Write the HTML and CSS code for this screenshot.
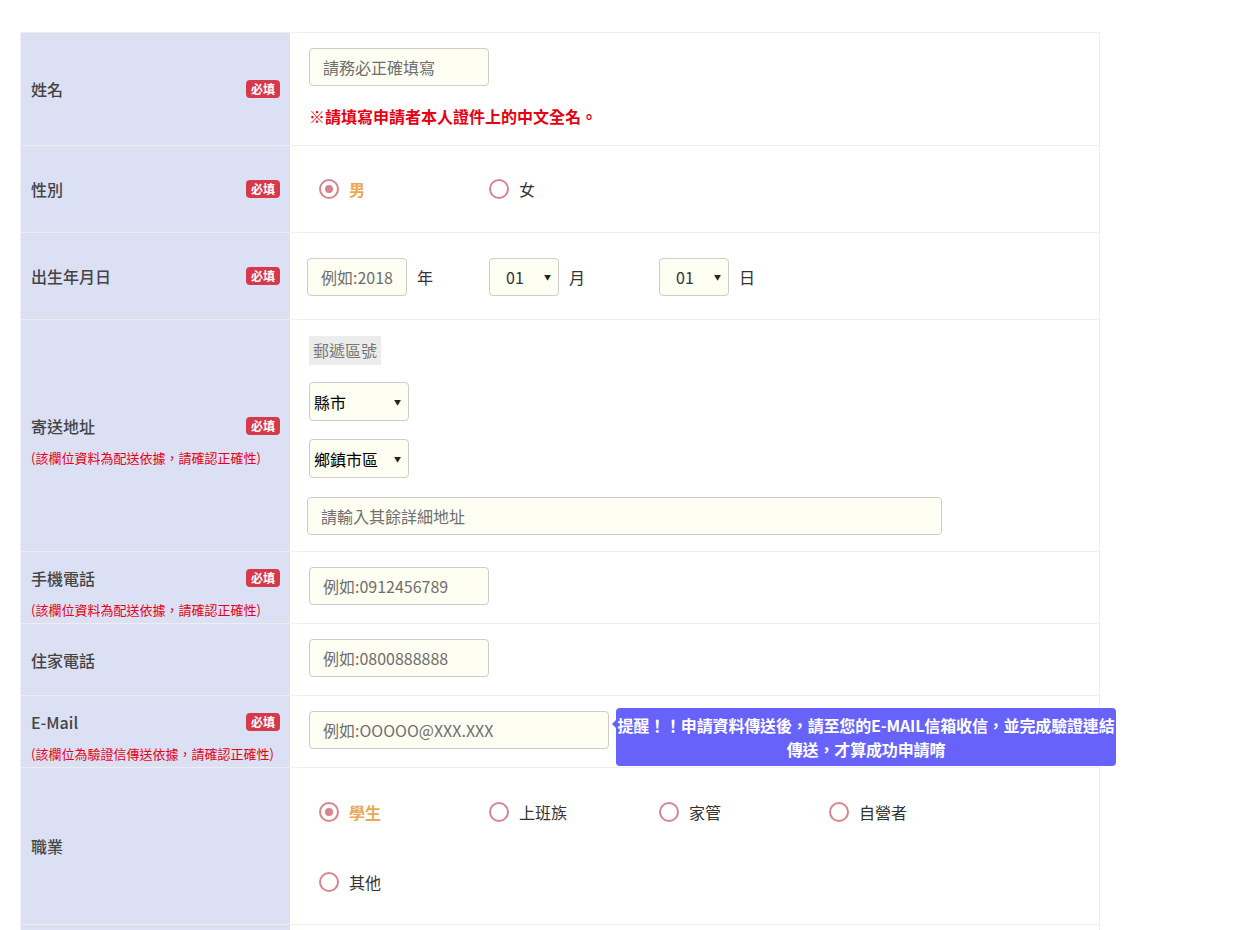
FILE: index.html
```html
<!DOCTYPE html>
<html lang="zh-Hant">
<head>
  <meta charset="UTF-8">
  <meta name="viewport" content="width=device-width, initial-scale=1.0">
  <title>申請表單</title>
  <link rel="stylesheet" href="styles.css">
</head>
<body>
  <div class="form">
    <!-- 姓名 -->
    <div class="row">
      <div class="label">
        <div class="label-head"><span>姓名</span><span class="badge">必填</span></div>
      </div>
      <div class="field name-field">
        <input class="text-input" type="text" placeholder="請務必正確填寫">
        <div class="warn">※請填寫申請者本人證件上的中文全名。</div>
      </div>
    </div>

    <!-- 性別 -->
    <div class="row">
      <div class="label">
        <div class="label-head"><span>性別</span><span class="badge">必填</span></div>
      </div>
      <div class="field radio-field gender-field">
        <label class="option checked"><span class="radio"></span>男</label>
        <label class="option"><span class="radio"></span>女</label>
      </div>
    </div>

    <!-- 出生年月日 -->
    <div class="row">
      <div class="label">
        <div class="label-head"><span>出生年月日</span><span class="badge">必填</span></div>
      </div>
      <div class="field date-field">
        <div class="date-group first">
          <input class="text-input year-input" type="text" placeholder="例如:2018">
          <span class="unit">年</span>
        </div>
        <div class="date-group">
          <span class="select-wrap date-select"><select><option>01</option></select></span>
          <span class="unit">月</span>
        </div>
        <div class="date-group">
          <span class="select-wrap date-select"><select><option>01</option></select></span>
          <span class="unit">日</span>
        </div>
      </div>
    </div>

    <!-- 寄送地址 -->
    <div class="row">
      <div class="label has-note">
        <div class="label-head"><span>寄送地址</span><span class="badge">必填</span></div>
        <div class="note">(該欄位資料為配送依據，請確認正確性)</div>
      </div>
      <div class="field address-field">
        <span class="zip">郵遞區號</span>
        <span class="select-wrap addr-select"><select><option>縣市</option></select></span>
        <span class="select-wrap addr-select"><select><option>鄉鎮市區</option></select></span>
        <input class="text-input addr-input" type="text" placeholder="請輸入其餘詳細地址">
      </div>
    </div>

    <!-- 手機電話 -->
    <div class="row">
      <div class="label has-note">
        <div class="label-head"><span>手機電話</span><span class="badge">必填</span></div>
        <div class="note">(該欄位資料為配送依據，請確認正確性)</div>
      </div>
      <div class="field">
        <input class="text-input" type="text" placeholder="例如:0912456789">
      </div>
    </div>

    <!-- 住家電話 -->
    <div class="row">
      <div class="label">
        <div class="label-head"><span>住家電話</span></div>
      </div>
      <div class="field">
        <input class="text-input" type="text" placeholder="例如:0800888888">
      </div>
    </div>

    <!-- E-Mail -->
    <div class="row">
      <div class="label has-note">
        <div class="label-head"><span>E-Mail</span><span class="badge">必填</span></div>
        <div class="note">(該欄位為驗證信傳送依據，請確認正確性)</div>
      </div>
      <div class="field">
        <div class="email-wrap">
          <input class="text-input email-input" type="text" placeholder="例如:OOOOO@XXX.XXX">
          <div class="tip">提醒！！申請資料傳送後，請至您的E-MAIL信箱收信，並完成驗證連結<br>傳送，才算成功申請唷</div>
        </div>
      </div>
    </div>

    <!-- 職業 -->
    <div class="row">
      <div class="label">
        <div class="label-head"><span>職業</span></div>
      </div>
      <div class="field radio-field job-field">
        <label class="option checked"><span class="radio"></span>學生</label>
        <label class="option"><span class="radio"></span>上班族</label>
        <label class="option"><span class="radio"></span>家管</label>
        <label class="option"><span class="radio"></span>自營者</label>
        <label class="option"><span class="radio"></span>其他</label>
      </div>
    </div>

    <div class="row">
      <div class="label"></div>
      <div class="field empty-field"></div>
    </div>
  </div>
</body>
</html>
```

FILE: styles.css
```css
body {
  margin: 0;
  padding: 32px 0 0 20px;
  background-color: #fff;
  font-family: "Noto Sans CJK TC", "Noto Sans", sans-serif;
  font-size: 16px;
  color: #333;
}

.form {
  width: 1080px;
  border: 1px solid #eee;
  border-bottom: none;
  box-sizing: border-box;
}

.row {
  display: grid;
  grid-template-columns: 269px 1fr;
  border-bottom: 1px solid #eee;
}

.label {
  background-color: #dbe0f5;
  display: flex;
  flex-direction: column;
  justify-content: center;
  padding: 0 10px 0 10px;
}

.label.has-note {
  padding-top: 10px;
}

.label-head {
  display: flex;
  justify-content: space-between;
  align-items: center;
  line-height: 24px;
  color: #444;
  font-weight: 500;
}

.badge {
  background-color: #d63a4a;
  color: #fff;
  font-size: 12px;
  font-weight: bold;
  line-height: 18px;
  padding: 0 5px;
  border-radius: 4px;
}

.note {
  margin-top: 10px;
  font-size: 13px;
  line-height: 20px;
  color: #e60012;
}

.field {
  padding: 15px 19px 18px;
}

.text-input {
  display: block;
  width: 180px;
  height: 38px;
  box-sizing: border-box;
  padding: 0 13px;
  border: 1px solid #ccc;
  border-radius: 4px;
  background-color: #fefef2;
  font-family: inherit;
  font-size: 16px;
  color: #333;
}

.text-input::placeholder {
  color: #6f6f6f;
}

.name-field {
  padding-bottom: 17px;
}

.warn {
  margin-top: 18px;
  line-height: 24px;
  font-weight: bold;
  color: #e60012;
}

/* radios */
.radio-field {
  display: flex;
  flex-wrap: wrap;
  padding-left: 29px;
}

.gender-field {
  padding-top: 31px;
  padding-bottom: 31px;
}

.job-field {
  padding-top: 32px;
  padding-bottom: 30px;
  row-gap: 46px;
}

.option {
  width: 170px;
  display: flex;
  align-items: center;
  gap: 10px;
  line-height: 24px;
  color: #333;
}

.radio {
  width: 20px;
  height: 20px;
  box-sizing: border-box;
  border: 2px solid #d8848f;
  border-radius: 50%;
  display: flex;
  align-items: center;
  justify-content: center;
}

.option.checked {
  color: #e9a957;
  font-weight: bold;
}

.option.checked .radio::after {
  content: "";
  width: 8px;
  height: 8px;
  border-radius: 50%;
  background-color: #d8848f;
}

/* date */
.date-field {
  display: flex;
  align-items: center;
  padding: 25px 19px 23px 17px;
}

.date-group {
  width: 170px;
  display: flex;
  align-items: center;
}

.date-group.first {
  width: 182px;
}

.year-input {
  width: 100px;
}

.unit {
  margin-left: 10px;
}

.select-wrap {
  position: relative;
  display: block;
}

.select-wrap::after {
  content: "▼";
  position: absolute;
  right: 8px;
  top: 50%;
  transform: translateY(-55%);
  font-size: 7px;
  color: #222;
  pointer-events: none;
}

.select-wrap select {
  appearance: none;
  -webkit-appearance: none;
  display: block;
  box-sizing: border-box;
  border: 1px solid #ccc;
  border-radius: 4px;
  background-color: #fefef2;
  font-family: inherit;
  font-size: 16px;
}

.date-select select {
  width: 70px;
  height: 38px;
  padding: 0 0 0 16px;
  color: #333;
}

/* address */
.address-field {
  display: flex;
  flex-direction: column;
  align-items: flex-start;
  padding: 16px 19px 16px;
}

.zip {
  height: 29px;
  line-height: 29px;
  padding: 0 4px;
  background-color: #ececec;
  color: #777;
}

.addr-select {
  margin-top: 17px;
}

.addr-select + .addr-select {
  margin-top: 18px;
}

.addr-select select {
  width: 100px;
  height: 39px;
  padding: 0 0 0 4px;
  color: #000;
}

.addr-input {
  width: 635px;
  margin: 19px 0 0 -2px;
}

/* email */
.email-wrap {
  position: relative;
  width: 300px;
}

.email-input {
  width: 300px;
}

.tip {
  position: absolute;
  left: 307px;
  top: -3px;
  width: 500px;
  padding: 5px 0;
  background-color: #6763fa;
  border-radius: 4px;
  color: #fff;
  font-weight: bold;
  font-size: 16px;
  line-height: 24px;
  letter-spacing: -0.15px;
  text-align: center;
  white-space: nowrap;
}

.tip::before {
  content: "";
  position: absolute;
  left: -4px;
  top: 12px;
  border-style: solid;
  border-width: 4px 4px 4px 0;
  border-color: transparent #6763fa transparent transparent;
}

.empty-field {
  height: 60px;
}
```
